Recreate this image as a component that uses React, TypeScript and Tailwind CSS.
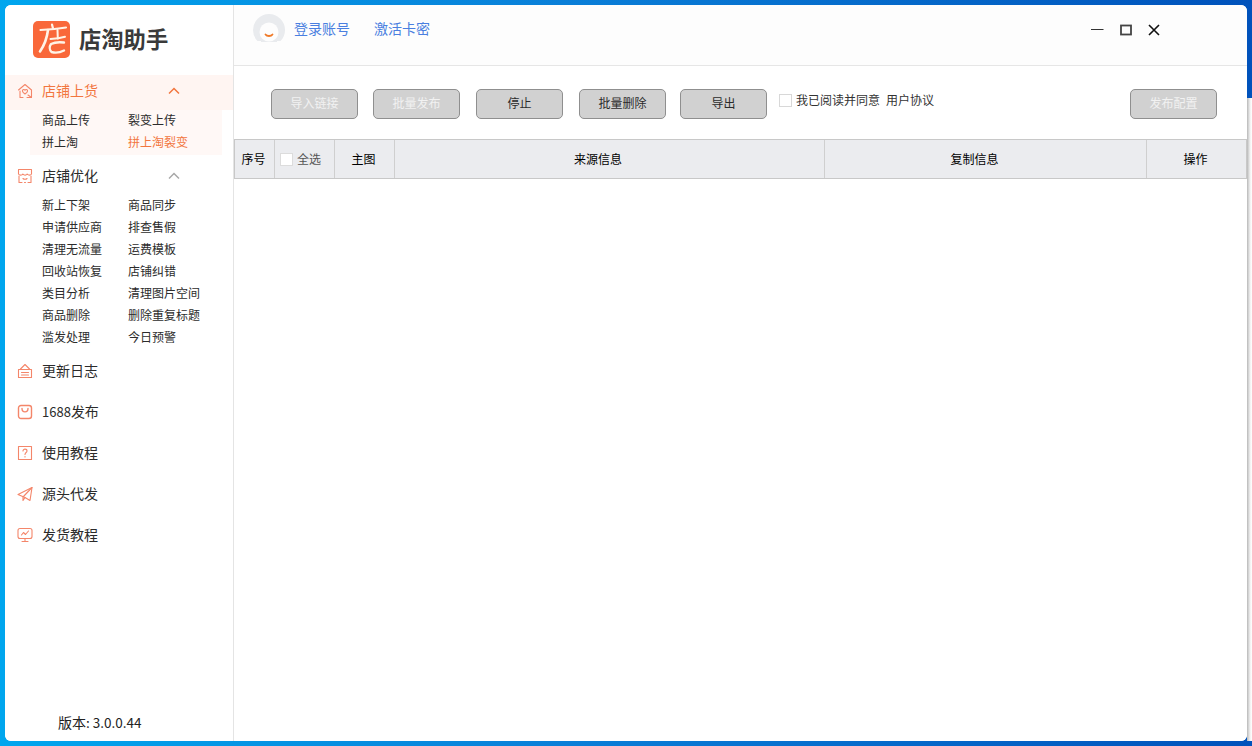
import React from "react";

function Logo() {
  return (
    <svg width="37" height="37" viewBox="0 0 37 37" className="shrink-0">
      <rect width="37" height="37" rx="5" fill="#f9683a" />
      <g fill="none" stroke="#fff3e6" strokeLinecap="round" strokeLinejoin="round">
        <path d="M19 3.500l1 4" strokeWidth="2.200" />
        <path d="M7.500 9c9-.4 18-1.200 25.500-2.500" strokeWidth="2.200" />
        <path d="M15 9c-1 8-3.500 15-8 21.500" strokeWidth="2.600" />
        <path d="M17.500 18c5-.3 10-1 14.500-2.300" strokeWidth="2" />
        <path d="M24.500 9l.3 8.500" strokeWidth="2" />
        <path d="M31 21.500c-5-.6-10 0-13 1.500c-1.800 2.500-1.500 6 .5 8c3.500 1 9 .3 12.500-1.500" strokeWidth="2.400" />
      </g>
    </svg>
  );
}

function Avatar() {
  return (
    <svg width="32" height="32" viewBox="0 0 32 32" className="shrink-0">
      <circle cx="16" cy="16" r="16" fill="#e9ebee" />
      <circle cx="16" cy="18" r="9.500" fill="#fdfdfd" />
      <rect x="0" y="28" width="32" height="4" fill="#fdfdfd" />
      <path d="M3 27h5v2H4zM24 27h5l-1 2h-4z" fill="#fdfdfd" />
      <path d="M12.500 20.500c1.500 2 5.500 2 7 0" fill="none" stroke="#f07a28" strokeWidth="1.800" strokeLinecap="round" />
    </svg>
  );
}

const stroke = { fill: "none", stroke: "#f4866a", strokeWidth: 1.1, strokeLinejoin: "round" as const, strokeLinecap: "round" as const };

const icons: Record<string, React.ReactNode> = {
  shop: (
    <svg width="16" height="16" viewBox="0 0 16 16" {...stroke}>
      <path d="M1.500 7L8 1.500 14.500 7v7.500H10M6 14.500H3V8" />
      <path d="M8 11c-1.500-1-3-2-2.500-3.500C6 6.300 7.500 6.300 8 7.300c.5-1 2-1 2.500.2C11 9 9.500 10 8 11z" />
      <path d="M11 12l3.500 2.500" />
    </svg>
  ),
  store: (
    <svg width="16" height="16" viewBox="0 0 16 16" {...stroke}>
      <path d="M1.500 1.500h13V6c-1 1.500-3 1.500-4.300 0-1 1.500-3.200 1.500-4.300 0-1 1.500-3.400 1.500-4.400 0z" />
      <path d="M2 8v6.500h3M7.500 14.500h1M11 14.500h3V8" />
      <path d="M6 10.500c1 1 3 1 4 0" />
    </svg>
  ),
  log: (
    <svg width="16" height="16" viewBox="0 0 16 16" {...stroke}>
      <path d="M3.500 6L8 1.500 12.500 6" />
      <path d="M1.500 6.500h13v8h-13z" />
      <path d="M4.500 9.500h7M4.500 12h7" />
    </svg>
  ),
  bag: (
    <svg width="16" height="16" viewBox="0 0 16 16" {...stroke} strokeWidth={1.4}>
      <rect x="1.500" y="1.500" width="13" height="13" rx="2.500" />
      <path d="M5 4.500c0 4.500 6 4.500 6 0" />
    </svg>
  ),
  help: (
    <svg width="16" height="16" viewBox="0 0 16 16" {...stroke}>
      <rect x="1.500" y="1.500" width="13" height="13" />
      <path d="M6 6c0-2.500 4-2.500 4 0 0 1.500-2 1.500-2 3.500M8 11.500v.5" />
    </svg>
  ),
  plane: (
    <svg width="16" height="16" viewBox="0 0 16 16" {...stroke}>
      <path d="M1 8.500L15 1.500 13 14.500 8 11.500 1 8.500z" />
      <path d="M15 1.500L6 11v3.500l2-3" />
    </svg>
  ),
  screen: (
    <svg width="16" height="16" viewBox="0 0 16 16" {...stroke}>
      <rect x="1" y="1.500" width="14" height="10" rx="2" />
      <path d="M4.500 8l2-2.500 2 2L11.500 4M5 14.500h6M8 11.500v3" />
    </svg>
  ),
};

function Chevron({ color }: { color: string }) {
  return (
    <svg width="12" height="8" viewBox="0 0 12 8" className="ml-auto mr-[53px]" fill="none" stroke={color} strokeWidth="1.500">
      <path d="M1 6.500L6 1.500l5 5" />
    </svg>
  );
}

function Btn({ label, dim }: { label: string; dim?: boolean }) {
  return (
    <div className={`w-[87px] h-[30px] pb-[2px] shrink-0 flex items-center justify-center rounded-[5px] border border-[#8f8f8f] bg-[#d1d1d1] text-[12px] ${dim ? "text-[#f2f2f2]" : "text-[#2b2b2b]"}`}>
      {label}
    </div>
  );
}

function SubGrid({ items, className = "" }: { items: [string, boolean?][]; className?: string }) {
  return (
    <div className={`grid grid-cols-[86px_86px] pl-[12px] ${className}`}>
      {items.map(([t, on]) => (
        <div key={t} className={`h-[22px] leading-[22px] text-[12px] ${on ? "text-[#f2763f]" : "text-[#2c2c2c]"}`}>{t}</div>
      ))}
    </div>
  );
}

function MainRow({ icon, label }: { icon: string; label: React.ReactNode }) {
  return (
    <div className="h-[41px] flex items-center pl-[12px] gap-[9px] text-[14px] text-[#2b2b2b]">
      <span className="w-[16px] h-[16px] shrink-0">{icons[icon]}</span>
      <span>{label}</span>
    </div>
  );
}

const cols: [string, string][] = [
  ["序号", "w-[40px] pr-[2px] justify-center"],
  ["", "w-[60px] pl-[5px] justify-start"],
  ["主图", "w-[60px] pr-[2px] justify-center"],
  ["来源信息", "w-[430px] pr-[23px] justify-center"],
  ["复制信息", "w-[322px] pr-[22px] justify-center"],
  ["操作", "flex-1 pr-[2px] justify-center"],
];

export default function App() {
  return (
    <div
      className="relative w-[1252px] h-[746px] overflow-hidden p-[5px] bg-[linear-gradient(90deg,#00a6ee_0%,#0a7fd8_45%,#0052bb_100%)]"
      style={{ fontFamily: '"Noto Sans CJK SC", "Liberation Sans", sans-serif' }}
    >
      <div className="absolute right-0 top-[98px] bottom-[5px] w-[5px] bg-[linear-gradient(90deg,#b8b8b8,#f0f0f0_60%,#ffffff)]" />
      <div className="relative w-[1242px] h-[736px] flex bg-white rounded-[6px] overflow-hidden">
        {/* Sidebar */}
        <aside className="w-[229px] shrink-0 flex flex-col border-r border-[#e4e4e4] bg-white">
          <div className="h-[70px] shrink-0 flex items-start pl-[28px] pt-[16px] gap-[9px]">
            <Logo />
            <span className="h-[37px] flex items-center pb-[2px] text-[22.300px] font-bold text-[#3a3a3a] leading-none">店淘助手</span>
          </div>
          <div className="h-[35px] pb-[4px] flex items-center pl-[12px] gap-[9px] bg-[#fff5f2] text-[14px] text-[#f2763f]">
            <span className="w-[16px] h-[16px] shrink-0">{icons.shop}</span>
            <span>店铺上货</span>
            <Chevron color="#f2763f" />
          </div>
          <div className="pl-[25px] pr-[11px]">
            <div className="bg-[#fff8f6] h-[45px]">
              <SubGrid
                className="-translate-y-[1px]"
                items={[["商品上传"], ["裂变上传"], ["拼上淘"], ["拼上淘裂变", true]]}
              />
            </div>
          </div>
          <div className="mt-[4px] h-[35px] pb-[2px] flex items-center pl-[12px] gap-[9px] text-[14px] text-[#2b2b2b]">
            <span className="w-[16px] h-[16px] shrink-0">{icons.store}</span>
            <span>店铺优化</span>
            <Chevron color="#a8a8a8" />
          </div>
          <div className="pl-[25px]">
            <SubGrid
              items={[
                ["新上下架"], ["商品同步"], ["申请供应商"], ["排查售假"], ["清理无流量"], ["运费模板"],
                ["回收站恢复"], ["店铺纠错"], ["类目分析"], ["清理图片空间"], ["商品删除"], ["删除重复标题"],
                ["滥发处理"], ["今日预警"],
              ]}
            />
          </div>
          <div className="mt-[2px]">
            <MainRow icon="log" label="更新日志" />
            <MainRow icon="bag" label={<><span className="text-[13px]">1688</span>发布</>} />
            <MainRow icon="help" label="使用教程" />
            <MainRow icon="plane" label="源头代发" />
            <MainRow icon="screen" label="发货教程" />
          </div>
          <div className="mt-auto h-[38px] pl-[53px] text-[14px] text-[#222] leading-[38px]">
            版本<span className="text-[13.500px]">: 3.0.0.44</span>
          </div>
        </aside>

        {/* Main */}
        <main className="flex-1 flex flex-col min-w-0">
          <header className="h-[61px] shrink-0 flex items-start bg-[#fdfdfd] border-b border-[#e6e6e6] pl-[19px]">
            <div className="flex items-center h-[32px] mt-[9px]">
              <Avatar />
              <span className="ml-[9px] mb-[4px] text-[14px] text-[#4a7fe0] whitespace-nowrap">登录账号</span>
              <span className="ml-[24px] mb-[4px] text-[14px] text-[#4a7fe0] whitespace-nowrap">激活卡密</span>
            </div>
            <div className="ml-auto flex items-center h-[12px] mt-[19px] mr-[87px] gap-[16px]">
              <svg width="13" height="12" viewBox="0 0 13 12"><path d="M0 5.500h12.500" stroke="#333" strokeWidth="1.200" /></svg>
              <svg width="12" height="12" viewBox="0 0 12 12"><rect x="1" y="1.500" width="10" height="9" fill="none" stroke="#444" strokeWidth="1.800" /></svg>
              <svg width="12" height="12" viewBox="0 0 12 12"><path d="M1 1l10 10M11 1L1 11" stroke="#111" strokeWidth="1.600" /></svg>
            </div>
          </header>

          <div className="h-[73px] shrink-0 flex items-start pt-[23px] pl-[37px] pr-[30px]">
            <Btn label="导入链接" dim />
            <div className="w-[15px]" />
            <Btn label="批量发布" dim />
            <div className="w-[16px]" />
            <Btn label="停止" />
            <div className="w-[16px]" />
            <Btn label="批量删除" />
            <div className="w-[14px]" />
            <Btn label="导出" />
            <div className="ml-[12px] flex items-center h-[22px] text-[12px] text-[#333] whitespace-nowrap">
              <span className="w-[13px] h-[13px] border border-[#d8d8d8] bg-white mr-[4px]" />
              <span>我已阅读并同意</span>
              <span className="ml-[6px]">用户协议</span>
            </div>
            <div className="ml-auto"><Btn label="发布配置" dim /></div>
          </div>

          <div className="h-[40px] shrink-0 flex bg-[#ebecef] border border-[#c8c8c8] text-[12px] text-black">
            {cols.map(([t, w], i) => (
              <div key={i} className={`${w} flex items-center ${i < cols.length - 1 ? "border-r border-[#cfcfcf]" : ""}`}>
                {t || (
                  <span className="flex items-center text-[#555]">
                    <span className="w-[13px] h-[13px] border border-[#dcdcdc] bg-white mr-[4px]" />
                    全选
                  </span>
                )}
              </div>
            ))}
          </div>
          <div className="flex-1 bg-white" />
        </main>
      </div>
    </div>
  );
}
